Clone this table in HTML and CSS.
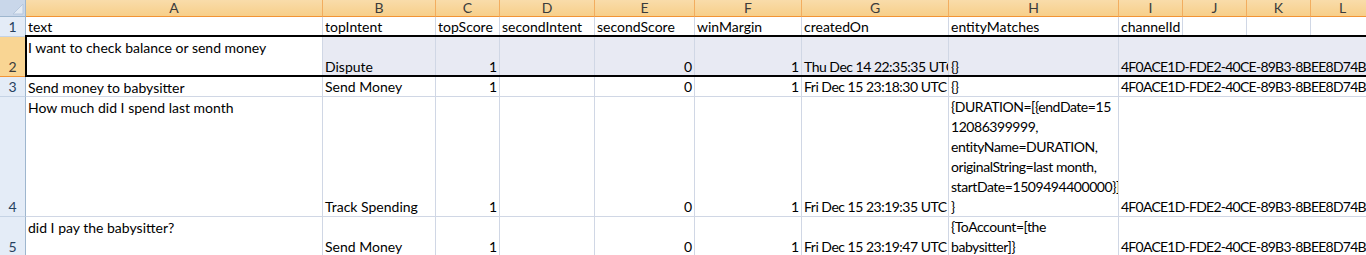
FILE: index.html
```html
<!DOCTYPE html>
<html lang="en">
<head>
<meta charset="utf-8">
<title>Sheet1</title>
<link rel="stylesheet" href="styles.css">
</head>
<body>
<div class="sheet">
  <div class="grid">
    <!-- column headers -->
    <div class="corner"><svg class="tri" width="12" height="12" viewBox="0 0 12 12"><polygon points="11,1 11,11 1,11" fill="#e3ebf5" stroke="#b7c8de" stroke-width="1"/></svg></div>
    <div class="ch">A</div>
    <div class="ch">B</div>
    <div class="ch">C</div>
    <div class="ch">D</div>
    <div class="ch">E</div>
    <div class="ch">F</div>
    <div class="ch">G</div>
    <div class="ch">H</div>
    <div class="ch">I</div>
    <div class="ch">J</div>
    <div class="ch">K</div>
    <div class="ch">L</div>

    <!-- row 1 -->
    <div class="rh"><span>1</span></div>
    <div class="c"><span>text</span></div>
    <div class="c"><span>topIntent</span></div>
    <div class="c"><span>topScore</span></div>
    <div class="c"><span>secondIntent</span></div>
    <div class="c"><span>secondScore</span></div>
    <div class="c"><span>winMargin</span></div>
    <div class="c"><span>createdOn</span></div>
    <div class="c"><span>entityMatches</span></div>
    <div class="c"><span>channelId</span></div>
    <div class="c"></div>
    <div class="c"></div>
    <div class="c"></div>

    <!-- row 2 (selected) -->
    <div class="rh rh-sel"><span>2</span></div>
    <div class="c top"><span>I want to check balance or send money</span></div>
    <div class="c sel"><span>Dispute</span></div>
    <div class="c sel num"><span>1</span></div>
    <div class="c sel"></div>
    <div class="c sel num"><span>0</span></div>
    <div class="c sel num"><span>1</span></div>
    <div class="c sel date"><span>Thu Dec 14 22:35:35 UTC 2017</span></div>
    <div class="c sel ent"><span>{}</span></div>
    <div class="c sel span4 id"><span>4F0ACE1D-FDE2-40CE-89B3-8BEE8D74B4F1</span></div>

    <!-- row 3 -->
    <div class="rh"><span>3</span></div>
    <div class="c top"><span>Send money to babysitter</span></div>
    <div class="c"><span>Send Money</span></div>
    <div class="c num"><span>1</span></div>
    <div class="c"></div>
    <div class="c num"><span>0</span></div>
    <div class="c num"><span>1</span></div>
    <div class="c date"><span>Fri Dec 15 23:18:30 UTC 2017</span></div>
    <div class="c ent"><span>{}</span></div>
    <div class="c span4 id"><span>4F0ACE1D-FDE2-40CE-89B3-8BEE8D74B4F1</span></div>

    <!-- row 4 -->
    <div class="rh"><span>4</span></div>
    <div class="c top"><span>How much did I spend last month</span></div>
    <div class="c"><span>Track Spending</span></div>
    <div class="c num"><span>1</span></div>
    <div class="c"></div>
    <div class="c num"><span>0</span></div>
    <div class="c num"><span>1</span></div>
    <div class="c date"><span>Fri Dec 15 23:19:35 UTC 2017</span></div>
    <div class="c ent"><span>{DURATION=[{endDate=15<br>12086399999,<br>entityName=DURATION,<br>originalString=last month,<br>startDate=1509494400000}]<br>}</span></div>
    <div class="c span4 id"><span>4F0ACE1D-FDE2-40CE-89B3-8BEE8D74B4F1</span></div>

    <!-- row 5 -->
    <div class="rh"><span>5</span></div>
    <div class="c top"><span>did I pay the babysitter?</span></div>
    <div class="c"><span>Send Money</span></div>
    <div class="c num"><span>1</span></div>
    <div class="c"></div>
    <div class="c num"><span>0</span></div>
    <div class="c num"><span>1</span></div>
    <div class="c date"><span>Fri Dec 15 23:19:47 UTC 2017</span></div>
    <div class="c ent"><span>{ToAccount=[the<br>babysitter]}</span></div>
    <div class="c span4 id"><span>4F0ACE1D-FDE2-40CE-89B3-8BEE8D74B4F1</span></div>
  </div>
  <div class="selection"></div>
</div>
</body>
</html>
```

FILE: styles.css
```css
html, body {
  margin: 0;
  padding: 0;
  background: #ffffff;
  overflow: hidden;
}

.sheet {
  position: relative;
  width: 1366px;
  height: 255px;
  overflow: hidden;
  font-family: "Lato", "Liberation Sans", sans-serif;
  font-size: 14px;
  color: #000000;
}

.grid {
  display: grid;
  grid-template-columns: 26px 297px 113px 64px 95px 100px 107px 147px 170px 64px 64px 64px 64px;
  grid-template-rows: 17px 20px 40px 20px 120px 40px;
  width: 1375px;
}

.corner {
  box-sizing: border-box;
  background: #c9d7ea;
  border-right: 1px solid #9eb6ce;
  border-bottom: 1px solid #9eb6ce;
  display: flex;
  align-items: flex-end;
  justify-content: flex-end;
  padding: 0 1px 1px 0;
}

.tri {
  display: block;
}

.ch {
  box-sizing: border-box;
  background: linear-gradient(#f9dcaa, #f7cf8a);
  border-right: 1px solid #f2ad5f;
  border-bottom: 1px solid #f29436;
  color: #3b3b3b;
  text-align: center;
  line-height: 16px;
}

.rh {
  box-sizing: border-box;
  background: #e4ecf7;
  border-right: 1px solid #9eb6ce;
  border-bottom: 1px solid #c5d3e5;
  color: #27415f;
  display: flex;
  align-items: flex-end;
  justify-content: center;
  line-height: 20px;
}

.rh > span {
  margin-bottom: -1px;
}

.rh-sel {
  background: #f9d593;
  border-right-color: #f29436;
  border-bottom-color: #f29436;
  color: #3b3b3b;
}

.c {
  box-sizing: border-box;
  border-right: 1px solid #d0d7e5;
  border-bottom: 1px solid #d0d7e5;
  padding: 0 2px 0 2px;
  display: flex;
  align-items: flex-end;
  justify-content: flex-start;
  overflow: hidden;
  white-space: nowrap;
  line-height: 20px;
  background: #ffffff;
}

.c > span {
  flex: none;
  margin-bottom: -1px;
}

.top {
  align-items: flex-start;
  padding-top: 1px;
}

.top > span {
  margin-bottom: 0;
}

.num {
  justify-content: flex-end;
}

.date {
  letter-spacing: -0.5px;
}

.ent {
  letter-spacing: -0.45px;
}

.id {
  letter-spacing: -0.75px;
}

.sel {
  background: #e8eaf3;
}

.span4 {
  grid-column: span 4;
}

.selection {
  position: absolute;
  left: 25px;
  top: 35px;
  width: 1400px;
  height: 42px;
  box-sizing: border-box;
  border: 2px solid #000000;
  pointer-events: none;
}
```
